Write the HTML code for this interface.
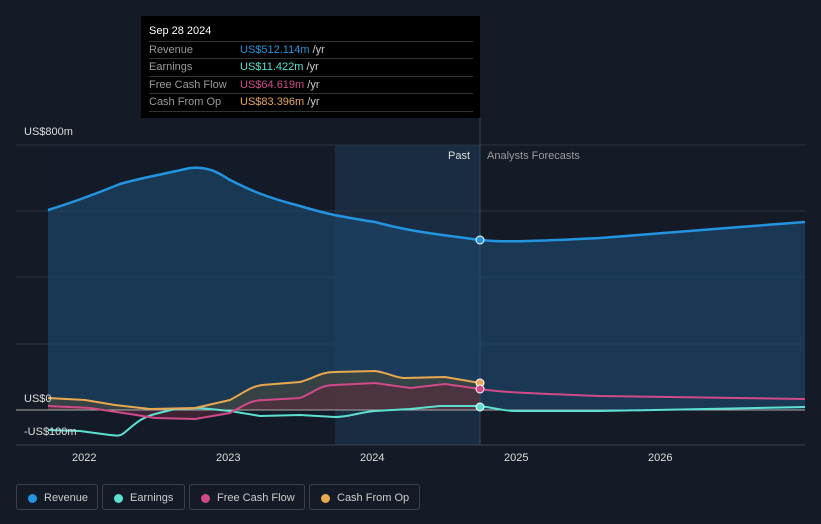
<!DOCTYPE html><html><head><style>
body{margin:0;width:821px;height:524px;background:#151b26;font-family:"Liberation Sans",sans-serif;overflow:hidden;position:relative}
.tt{position:absolute;left:141px;top:16px;width:339px;height:102px;background:#000;color:#fff;font-size:11px}
.tt .h{position:absolute;left:8px;top:9px;font-size:11px}
.row{position:absolute;left:8px;width:324px;border-top:1px solid #333;height:17px;line-height:17px}
.row span.l{color:#9a9a9a;position:absolute;left:0}
.row span.v{position:absolute;left:91px}
.row i{font-style:normal;color:#ccc}
.leg{position:absolute;top:484px;height:26px;border:1px solid #3a414d;border-radius:3px;color:#ccc;font-size:11px;line-height:26px;box-sizing:border-box;padding-left:27px}
.leg b{position:absolute;left:11px;top:9px;width:9px;height:9px;border-radius:50%}
.ax{position:absolute;color:#ddd;font-size:11px}
</style></head><body>
<svg width="821" height="524" style="position:absolute;left:0;top:0">
<rect x="335" y="145" width="145" height="300" fill="#1b3148" opacity="0.8"/>
<rect x="48" y="145" width="287" height="300" fill="#131b28"/>
<g stroke="#2a3340" stroke-width="1"><line x1="16" y1="145" x2="805" y2="145"/><line x1="16" y1="211" x2="805" y2="211"/><line x1="16" y1="277" x2="805" y2="277"/><line x1="16" y1="344" x2="805" y2="344"/></g>
<path d="M48,210 C64,205 80,200 120,184 C140,178 155,176 190,168 C210,166 220,174 230,180 C250,190 265,197 300,206 C320,212 335,216 375,222 C390,226 410,231 450,236 L480,240 C500,242 520,242 600,238 C640,235 660,233 740,227 L805,222 L805,410 L48,410Z" fill="#1d4566" opacity="0.7"/>
<path d="M48,210 C64,205 80,200 120,184 C140,178 155,176 190,168 C210,166 220,174 230,180 C250,190 265,197 300,206 C320,212 335,216 375,222 C390,226 410,231 450,236 L480,240 C500,242 520,242 600,238 C640,235 660,233 740,227 L805,222" fill="none" stroke="#2394e0" stroke-width="2.5"/>
<path d="M48,398 L85,400 L115,405 L150,409 L195,408 L230,400 C245,392 250,387 262,385 L300,382 C315,378 320,372 335,372 L375,371 C390,373 395,378 405,378 L445,377 L480,383 L480,410 L48,410Z" fill="#4a4a3a" opacity="0.6"/>
<path d="M48,406 L90,408 L130,414 L155,418 L195,419 L230,413 C245,405 250,400 265,400 L300,398 C315,392 320,385 335,385 L375,383 L410,388 L445,384 L480,389 L480,410 L48,410Z" fill="#5a2a3a" opacity="0.6"/>
<line x1="16" y1="410" x2="805" y2="410" stroke="#aaa" stroke-width="1"/>
<line x1="16" y1="445" x2="805" y2="445" stroke="#3a414d" stroke-width="1"/>
<line x1="480" y1="118" x2="480" y2="445" stroke="#2a4a6a" stroke-width="1"/>
<path d="M48,430 L80,431 L110,435 C118,436 120,436 124,433 C135,424 140,418 155,414 L175,409 L200,408 L230,411 L260,416 L300,415 L335,417 C350,417 360,412 375,411 L410,409 L440,406 L480,406 C495,408 505,411 515,411 L600,411 L805,407" fill="none" stroke="#5de0d2" stroke-width="2"/>
<path d="M48,406 L90,408 L130,414 L155,418 L195,419 L230,413 C245,405 250,400 265,400 L300,398 C315,392 320,385 335,385 L375,383 L410,388 L445,384 L480,389 C500,392 520,393 600,396 L805,399" fill="none" stroke="#d04a8a" stroke-width="2"/>
<path d="M48,398 L85,400 L115,405 L150,409 L195,408 L230,400 C245,392 250,387 262,385 L300,382 C315,378 320,372 335,372 L375,371 C390,373 395,378 405,378 L445,377 L480,383" fill="none" stroke="#e8a850" stroke-width="2"/>
<g stroke="#fff" stroke-width="1"><circle cx="480" cy="240" r="4" fill="#2394e0"/><circle cx="480" cy="383" r="4" fill="#e8a850"/><circle cx="480" cy="389" r="4" fill="#d04a8a"/><circle cx="480" cy="407" r="4" fill="#5de0d2"/></g>
</svg>
<div class="ax" style="left:24px;top:126px">US$800m</div>
<div class="ax" style="left:24px;top:393px">US$0</div>
<div class="ax" style="left:24px;top:426px">-US$100m</div>
<div class="ax" style="left:448px;top:150px">Past</div>
<div class="ax" style="left:487px;top:150px;color:#999">Analysts Forecasts</div>
<div class="ax" style="left:72px;top:452px">2022</div>
<div class="ax" style="left:216px;top:452px">2023</div>
<div class="ax" style="left:360px;top:452px">2024</div>
<div class="ax" style="left:504px;top:452px">2025</div>
<div class="ax" style="left:648px;top:452px">2026</div>
<div class="tt"><div class="h">Sep 28 2024</div>
<div class="row" style="top:25px"><span class="l">Revenue</span><span class="v" style="color:#2394e0">US$512.114m <i>/yr</i></span></div>
<div class="row" style="top:42px"><span class="l">Earnings</span><span class="v" style="color:#5de0d2">US$11.422m <i>/yr</i></span></div>
<div class="row" style="top:60px"><span class="l">Free Cash Flow</span><span class="v" style="color:#d04a8a">US$64.619m <i>/yr</i></span></div>
<div class="row" style="top:77px;border-bottom:1px solid #333"><span class="l">Cash From Op</span><span class="v" style="color:#e8a850">US$83.396m <i>/yr</i></span></div>
</div>
<div class="leg" style="left:16px;width:82px"><b style="background:#2394e0"></b>Revenue</div>
<div class="leg" style="left:102px;width:83px"><b style="background:#5de0d2"></b>Earnings</div>
<div class="leg" style="left:189px;width:116px"><b style="background:#d04a8a"></b>Free Cash Flow</div>
<div class="leg" style="left:309px;width:111px"><b style="background:#e8a850"></b>Cash From Op</div>
</body></html>
